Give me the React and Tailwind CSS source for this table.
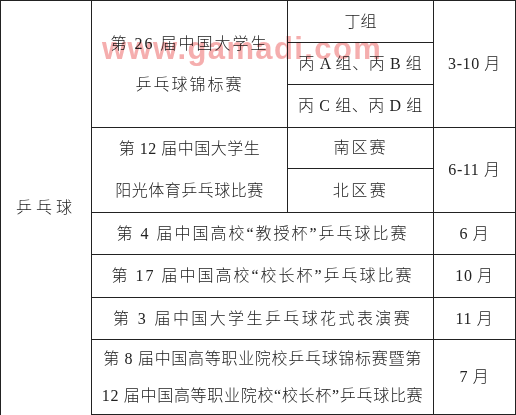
import React from "react";

const font = {
  fontFamily: '"Liberation Serif", "Noto Sans CJK SC", serif',
};

function Cell({ className = "", children, ...rest }) {
  return (
    <td
      className={`border border-[#222] p-0 text-center align-middle ${className}`}
      {...rest}
    >
      {children}
    </td>
  );
}

export default function App() {
  return (
    <div className="relative h-[415px] w-[516px] overflow-hidden bg-white">
      <table
        className="table-fixed border-collapse text-[16px] font-light text-[#222]"
        style={font}
      >
        <colgroup>
          <col className="w-[91px]" />
          <col className="w-[196px]" />
          <col className="w-[146px]" />
          <col className="w-[82px]" />
        </colgroup>
        <tbody>
          <tr className="h-[42px]">
            <Cell rowSpan={9} className="tracking-[4px]">
              乒乓球
            </Cell>
            <Cell rowSpan={3} className="leading-[41px] tracking-[2px]">
              第 26 届中国大学生
              <br />
              乒乓球锦标赛
            </Cell>
            <Cell>丁组</Cell>
            <Cell rowSpan={3} className="tracking-[0.6px]">
              3-10 月
            </Cell>
          </tr>
          <tr className="h-[42px]">
            <Cell className="tracking-[0.6px]">丙 A 组、丙 B 组</Cell>
          </tr>
          <tr className="h-[43px]">
            <Cell className="tracking-[0.6px]">丙 C 组、丙 D 组</Cell>
          </tr>
          <tr className="h-[41px]">
            <Cell rowSpan={2} className="leading-[42px] tracking-[0.5px]">
              第 12 届中国大学生
              <br />
              阳光体育乒乓球比赛
            </Cell>
            <Cell className="tracking-[2px]">南区赛</Cell>
            <Cell rowSpan={2} className="tracking-[0.6px]">
              6-11 月
            </Cell>
          </tr>
          <tr className="h-[43px]">
            <Cell className="tracking-[2.5px]">北区赛</Cell>
          </tr>
          <tr className="h-[42px]">
            <Cell colSpan={2} className="tracking-[2px]">
              第 4 届中国高校“教授杯”乒乓球比赛
            </Cell>
            <Cell className="tracking-[0.6px]">6 月</Cell>
          </tr>
          <tr className="h-[43px]">
            <Cell colSpan={2} className="tracking-[2px]">
              第 17 届中国高校“校长杯”乒乓球比赛
            </Cell>
            <Cell className="tracking-[0.6px]">10 月</Cell>
          </tr>
          <tr className="h-[42px]">
            <Cell colSpan={2} className="tracking-[2.4px]">
              第 3 届中国大学生乒乓球花式表演赛
            </Cell>
            <Cell className="tracking-[0.6px]">11 月</Cell>
          </tr>
          <tr className="h-[73px]">
            <Cell
              colSpan={2}
              className="border-b-2 leading-[37px] tracking-[0.7px]"
            >
              第 8 届中国高等职业院校乒乓球锦标赛暨第
              <br />
              12 届中国高等职业院校“校长杯”乒乓球比赛
            </Cell>
            <Cell className="border-b-2 tracking-[0.6px]">7 月</Cell>
          </tr>
        </tbody>
      </table>

      {/* watermark */}
      <div
        className="pointer-events-none absolute left-[102px] top-[33px] text-[31px] font-bold leading-none tracking-[1.4px] text-[#f4a0a0] opacity-85 mix-blend-multiply"
        style={{ fontFamily: '"Liberation Sans", Arial, sans-serif' }}
      >
        www.gamadi.com
      </div>
    </div>
  );
}
